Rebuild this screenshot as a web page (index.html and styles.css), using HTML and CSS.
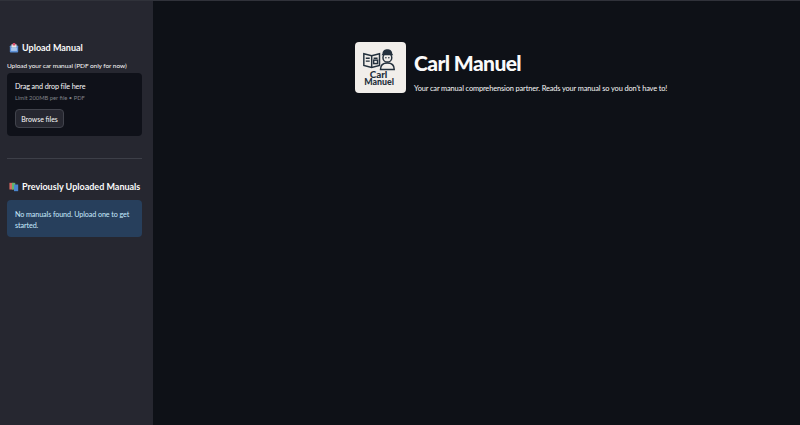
FILE: index.html
```html
<!DOCTYPE html>
<html lang="en">
<head>
    <meta charset="utf-8">
    <title>Carl Manuel</title>
    <link rel="stylesheet" href="styles.css">
</head>
<body>
    <div class="app">
        <aside class="sidebar">
            <h3 class="side-title">
                <svg class="emoji" viewBox="0 0 12 12">
                    <rect x="1" y="3" width="10" height="8.5" rx="1" fill="#5b8fd6"/>
                    <rect x="3" y="1.5" width="6" height="4" fill="#e8e4e0"/>
                    <rect x="4.5" y="0" width="3" height="3" fill="#d9486a"/>
                    <rect x="2.5" y="6" width="7" height="3.5" fill="#a9c6ec"/>
                </svg>
                Upload Manual
            </h3>
            <div class="upload-label">Upload your car manual (PDF only for now)</div>
            <div class="dropzone">
                <div class="drop-main">Drag and drop file here</div>
                <div class="drop-sub">Limit 200MB per file • PDF</div>
                <button class="browse" type="button">Browse files</button>
            </div>
            <hr class="divider">
            <h3 class="side-title">
                <svg class="emoji" viewBox="0 0 12 12">
                    <rect x="0.5" y="1" width="5" height="8" fill="#d9685f"/>
                    <rect x="3.5" y="1" width="4" height="8" fill="#62b56c"/>
                    <rect x="6" y="3" width="5" height="8" fill="#4a86cf"/>
                </svg>
                Previously Uploaded Manuals
            </h3>
            <div class="notice">No manuals found. Upload one to get started.</div>
        </aside>
        <main class="content">
            <div class="header">
                <div class="logo">
                    <svg viewBox="0 0 52 52" class="logo-art">
                        <g fill="none" stroke="#23303c" stroke-width="1.5">
                            <path d="M9 12 L17 14 L25 12 V24 L17 26 L9 24 Z"/>
                            <path d="M17 14 V26"/>
                            <path d="M11 16.5 H15 M11 19.5 H15 M19 16.5 H23"/>
                            <rect x="19" y="18.5" width="4" height="3.5"/>
                            <circle cx="33" cy="16" r="4.5" fill="#f1eeea"/>
                            <path d="M26 28 C26 23 29 21.5 33 21.5 C37 21.5 40 23 40 28 Z" fill="#f1eeea"/>
                        </g>
                        <path d="M28 12 C28 6 38 6 38 12 L39 13.5 H27 Z" fill="#23303c"/>
                        <circle cx="31.5" cy="16" r="0.8" fill="#23303c"/>
                        <circle cx="34.5" cy="16" r="0.8" fill="#23303c"/>
                        <text x="24" y="36.5" class="logo-carl" text-anchor="middle">Carl</text>
                        <text x="24.5" y="44" class="logo-manuel" text-anchor="middle">Manuel</text>
                    </svg>
                </div>
                <div class="header-text">
                    <h1 class="title">Carl Manuel</h1>
                    <p class="tagline">Your car manual comprehension partner. Reads your manual so you don't have to!</p>
                </div>
            </div>
        </main>
    </div>
</body>
</html>
```

FILE: styles.css
```css
* {
    box-sizing: border-box;
}

body {
    margin: 0;
    background-color: #0e1117;
    color: #fafafa;
    font-family: Lato, "Noto Sans", sans-serif;
}

.app {
    display: flex;
    height: 425px;
    overflow: hidden;
    border-top: 1px solid #30323a;
}

.sidebar {
    width: 153px;
    flex-shrink: 0;
    padding: 39px 11px 0 7px;
    background-color: #262730;
}

.side-title {
    display: flex;
    align-items: center;
    gap: 3px;
    margin: 0;
    padding-left: 2px;
    font-size: 9px;
    font-weight: 700;
    line-height: 16px;
    white-space: nowrap;
}

.emoji {
    width: 10px;
    height: 10px;
    flex-shrink: 0;
}

.upload-label {
    margin-top: 5px;
    font-size: 6.5px;
    letter-spacing: -0.06px;
    line-height: 10px;
    white-space: nowrap;
}

.dropzone {
    height: 63px;
    margin-top: 2px;
    padding: 8px;
    border-radius: 4px;
    background-color: #0f1119;
}

.drop-main {
    font-size: 7.2px;
    letter-spacing: -0.1px;
    line-height: 12px;
}

.drop-sub {
    color: #7f8188;
    font-size: 5.8px;
    line-height: 10px;
}

.browse {
    display: block;
    width: 49px;
    height: 19px;
    margin-top: 6px;
    padding: 0;
    border: 1px solid #41434c;
    border-radius: 4px;
    background-color: #262730;
    color: #fafafa;
    font-family: inherit;
    font-size: 6.9px;
}

.divider {
    height: 1px;
    margin: 22px 0 20px;
    border: 0;
    background-color: #3d3f48;
}

.notice {
    margin-top: 5px;
    padding: 9px 8px 6px;
    border-radius: 4px;
    background-color: #273f5c;
    color: #c7ebff;
    font-size: 7.2px;
    letter-spacing: -0.1px;
    line-height: 11px;
}

.content {
    flex: 1;
    padding: 41px 0 0 202px;
}

.header {
    display: flex;
    gap: 8px;
}

.logo {
    width: 51px;
    height: 51px;
    border-radius: 4px;
    background-color: #f1eeea;
}

.logo-art {
    display: block;
}

.logo-carl {
    fill: #23303c;
    font-family: Lato, sans-serif;
    font-size: 10px;
    font-weight: 900;
}

.logo-manuel {
    fill: #23303c;
    font-family: Lato, sans-serif;
    font-size: 9px;
    font-weight: 900;
}

.title {
    margin: 6px 0 0;
    font-size: 21px;
    font-weight: 900;
    letter-spacing: -0.6px;
    line-height: 30px;
}

.tagline {
    margin: 5px 0 0;
    font-size: 7.4px;
    letter-spacing: -0.12px;
    line-height: 12px;
    white-space: nowrap;
}
```
